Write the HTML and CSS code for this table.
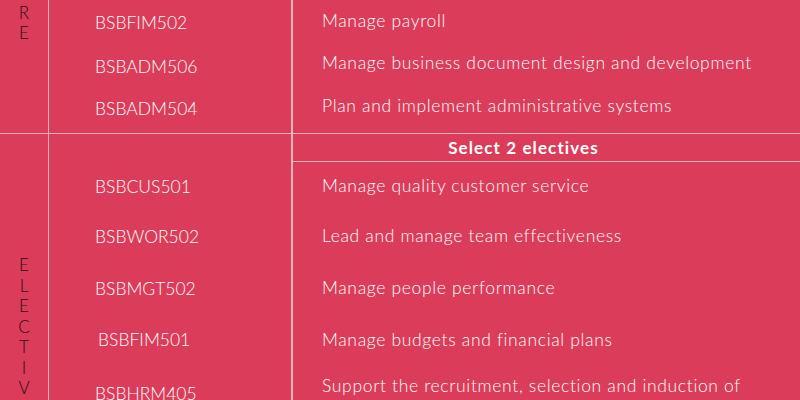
FILE: index.html
```html
<!DOCTYPE html>
<html lang="en">
<head>
<meta charset="utf-8">
<title>Units</title>
<link rel="stylesheet" href="styles.css">
</head>
<body>
<div class="table">
  <section class="group core">
    <div class="label"><span>C</span><span>O</span><span>R</span><span>E</span></div>
    <div class="rows">
      <div class="row r1"><div class="code">BSBFIM502</div><div class="title">Manage payroll</div></div>
      <div class="row r2"><div class="code">BSBADM506</div><div class="title">Manage business document design and development</div></div>
      <div class="row r3"><div class="code">BSBADM504</div><div class="title">Plan and implement administrative systems</div></div>
    </div>
  </section>
  <section class="group electives">
    <div class="label"><span>E</span><span>L</span><span>E</span><span>C</span><span>T</span><span>I</span><span>V</span><span>E</span><span>S</span></div>
    <div class="rows">
      <div class="row head"><div class="code"></div><div class="title">Select 2 electives</div></div>
      <div class="row e1"><div class="code">BSBCUS501</div><div class="title">Manage quality customer service</div></div>
      <div class="row e2"><div class="code">BSBWOR502</div><div class="title">Lead and manage team effectiveness</div></div>
      <div class="row e3"><div class="code">BSBMGT502</div><div class="title">Manage people performance</div></div>
      <div class="row e4"><div class="code shift">BSBFIM501</div><div class="title">Manage budgets and financial plans</div></div>
      <div class="row e5"><div class="code">BSBHRM405</div><div class="title">Support the recruitment, selection and induction of staff</div></div>
    </div>
  </section>
</div>
</body>
</html>
```

FILE: styles.css
```css
html, body {
  margin: 0;
  padding: 0;
  background: #db3c5a;
  overflow: hidden;
}

body {
  font-family: Lato, "Open Sans", sans-serif;
  color: #ffffff;
}

.table {
  display: flex;
  flex-direction: column;
  width: 800px;
}

.group {
  display: grid;
  grid-template-columns: 49px 1fr;
}

.group + .group {
  border-top: 1px solid #f1b2bf;
}

.label {
  display: flex;
  flex-direction: column;
  align-items: center;
  color: #2b0a12;
  font-size: 17px;
  line-height: 20.5px;
  font-weight: 300;
  border-right: 1.5px solid #f1b2bf;
}

.core .label {
  margin-top: -36px;
  line-height: 19.5px;
}

.electives .label {
  padding-top: 121px;
}

.rows {
  display: flex;
  flex-direction: column;
}

.row {
  display: grid;
  grid-template-columns: 244px 1fr;
}

.code {
  display: flex;
  align-items: center;
  padding-left: 46px;
  font-size: 17.5px;
  font-weight: 300;
  letter-spacing: 0;
  border-right: 2px solid #f1b2bf;
}

.code.shift {
  padding-left: 49px;
}

.title {
  display: flex;
  align-items: center;
  padding-left: 29px;
  padding-right: 40px;
  font-size: 17.5px;
  font-weight: 300;
  line-height: 22px;
  letter-spacing: 0.66px;
}

.r1 { height: 45px; }
.r2 { height: 43px; }
.r3 { height: 45px; }

.r1 .title { padding-bottom: 3px; }
.r2 .title { padding-bottom: 7px; }
.r3 .title { padding-bottom: 10px; }
.r3 .code { padding-bottom: 4px; }

.head { height: 28px; }
.head .title {
  justify-content: center;
  padding-left: 0;
  padding-right: 46px;
  font-size: 17px;
  font-weight: 700;
  letter-spacing: 1.1px;
  border-bottom: 1px solid #f1b2bf;
}

.e1 { height: 48px; }
.e2 { height: 52px; }
.e3 { height: 52px; }
.e4 { height: 51px; }
.e5 { height: 56px; }
.e5 .title {
  align-items: flex-start;
  padding-top: 10px;
}
```
